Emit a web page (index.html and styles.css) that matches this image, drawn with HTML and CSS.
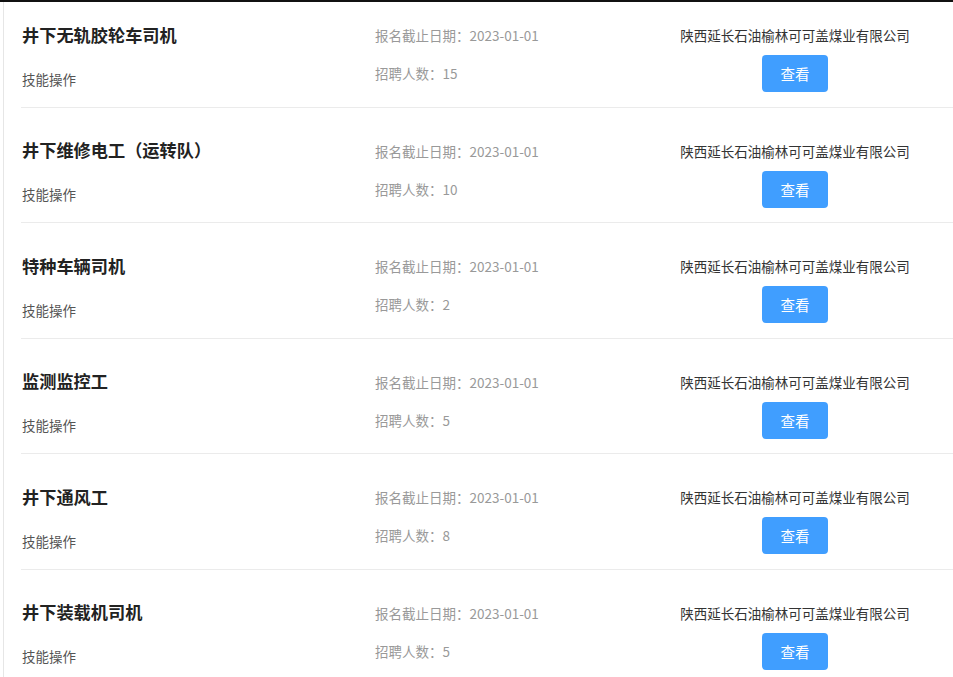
FILE: index.html
```html
<!DOCTYPE html>
<html lang="zh-CN">

<head>
    <meta charset="UTF-8">
    <meta name="viewport" content="width=device-width, initial-scale=1.0">
    <title>招聘岗位列表</title>
    <link rel="stylesheet" href="styles.css">
</head>

<body>
    <div class="topbar"></div>
    <div class="page">
        <ul class="job-list">
            <li class="job">
                <div class="job-main">
                    <h3 class="job-title">井下无轨胶轮车司机</h3>
                    <p class="job-type">技能操作</p>
                </div>
                <div class="job-info">
                    <p>报名截止日期：2023-01-01</p>
                    <p>招聘人数：15</p>
                </div>
                <div class="job-company">
                    <p>陕西延长石油榆林可可盖煤业有限公司</p>
                    <button class="btn">查看</button>
                </div>
            </li>
            <li class="job">
                <div class="job-main">
                    <h3 class="job-title">井下维修电工（运转队）</h3>
                    <p class="job-type">技能操作</p>
                </div>
                <div class="job-info">
                    <p>报名截止日期：2023-01-01</p>
                    <p>招聘人数：10</p>
                </div>
                <div class="job-company">
                    <p>陕西延长石油榆林可可盖煤业有限公司</p>
                    <button class="btn">查看</button>
                </div>
            </li>
            <li class="job">
                <div class="job-main">
                    <h3 class="job-title">特种车辆司机</h3>
                    <p class="job-type">技能操作</p>
                </div>
                <div class="job-info">
                    <p>报名截止日期：2023-01-01</p>
                    <p>招聘人数：2</p>
                </div>
                <div class="job-company">
                    <p>陕西延长石油榆林可可盖煤业有限公司</p>
                    <button class="btn">查看</button>
                </div>
            </li>
            <li class="job">
                <div class="job-main">
                    <h3 class="job-title">监测监控工</h3>
                    <p class="job-type">技能操作</p>
                </div>
                <div class="job-info">
                    <p>报名截止日期：2023-01-01</p>
                    <p>招聘人数：5</p>
                </div>
                <div class="job-company">
                    <p>陕西延长石油榆林可可盖煤业有限公司</p>
                    <button class="btn">查看</button>
                </div>
            </li>
            <li class="job">
                <div class="job-main">
                    <h3 class="job-title">井下通风工</h3>
                    <p class="job-type">技能操作</p>
                </div>
                <div class="job-info">
                    <p>报名截止日期：2023-01-01</p>
                    <p>招聘人数：8</p>
                </div>
                <div class="job-company">
                    <p>陕西延长石油榆林可可盖煤业有限公司</p>
                    <button class="btn">查看</button>
                </div>
            </li>
            <li class="job">
                <div class="job-main">
                    <h3 class="job-title">井下装载机司机</h3>
                    <p class="job-type">技能操作</p>
                </div>
                <div class="job-info">
                    <p>报名截止日期：2023-01-01</p>
                    <p>招聘人数：5</p>
                </div>
                <div class="job-company">
                    <p>陕西延长石油榆林可可盖煤业有限公司</p>
                    <button class="btn">查看</button>
                </div>
            </li>
        </ul>
    </div>
</body>

</html>
```

FILE: styles.css
```css
* {
    margin: 0;
    padding: 0;
    list-style: none;
    box-sizing: border-box;
}

html,
body {
    height: 100%;
    overflow: hidden;
}

body {
    background: #fff;
    font-family: "Noto Sans CJK SC", "Microsoft YaHei", sans-serif;
    color: #333;
}

/* 顶部黑条 */
.topbar {
    position: absolute;
    top: 0;
    left: 0;
    right: 0;
    height: 2px;
    background: #111;
    z-index: 2;
}

.page {
    display: flow-root;
    margin-left: 3px;
    height: 100%;
    border-left: 1px solid #e6e6e6;
}

.job-list {
    margin-left: 17px;
    margin-top: -8px;
}

.job {
    height: 115.5px;
    border-bottom: 1px solid #ebebeb;
    display: grid;
    grid-template-columns: 353px 285px 270px;
    padding: 29.5px 23px 0 1px;
}

.job-title {
    font-size: 17.2px;
    font-weight: bold;
    line-height: 25px;
    color: #222;
}

.job-type {
    margin-top: 22px;
    font-size: 13.5px;
    line-height: 20px;
    color: #555;
}

.job-info {
    padding-top: 3.5px;
    font-size: 13.5px;
    line-height: 20px;
    color: #999;
}

.job-info p+p {
    margin-top: 18px;
}

.job-company {
    padding-top: 3.5px;
    display: flex;
    flex-direction: column;
    align-items: center;
    font-size: 13.5px;
    line-height: 20px;
    color: #333;
}

.btn {
    margin-top: 10px;
    width: 66px;
    height: 37px;
    border: none;
    border-radius: 4px;
    background: #409eff;
    color: #fff;
    font-family: inherit;
    font-size: 14.5px;
    cursor: pointer;
}
```
